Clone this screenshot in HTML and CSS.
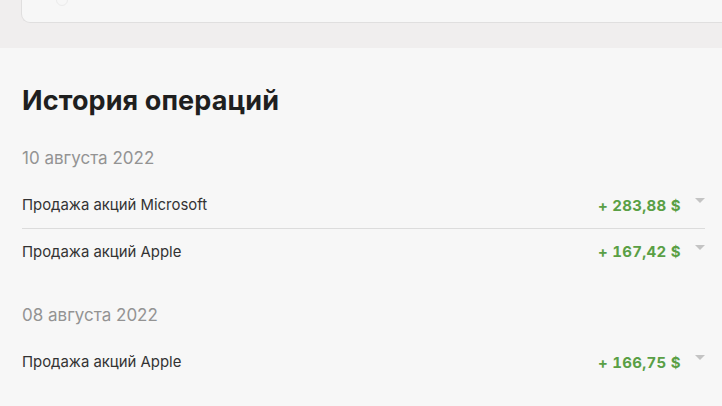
FILE: index.html
```html
<!DOCTYPE html>
<html lang="ru">
<head>
<meta charset="utf-8">
<link rel="stylesheet" href="styles.css">
</head>
<body>
<div class="top">
  <div class="card"><span class="card-dot"></span></div>
</div>
<section class="history">
  <h1 class="title">История операций</h1>
  <div class="group">
    <div class="date">10 августа 2022</div>
    <div class="row">
      <span class="name">Продажа акций Microsoft</span>
      <span class="amount">+ 283,88 $</span>
      <span class="caret"></span>
    </div>
    <div class="row">
      <span class="name">Продажа акций Apple</span>
      <span class="amount">+ 167,42 $</span>
      <span class="caret"></span>
    </div>
  </div>
  <div class="group">
    <div class="date">08 августа 2022</div>
    <div class="row">
      <span class="name">Продажа акций Apple</span>
      <span class="amount">+ 166,75 $</span>
      <span class="caret"></span>
    </div>
  </div>
</section>
</body>
</html>
```
FILE: styles.css
```css
html, body {
  margin: 0;
  padding: 0;
}
body {
  background: #f7f7f7;
  font-family: Inter, "Noto Sans", sans-serif;
  color: #262626;
  overflow: hidden;
}
.top {
  background: #f0eeee;
  height: 48px;
  padding-left: 21px;
  box-sizing: border-box;
}
.card {
  position: relative;
  height: 23px;
  box-sizing: border-box;
  background: #f7f7f7;
  border: 1px solid #e0dfdf;
  border-top: none;
  border-right: none;
  border-radius: 0 0 0 9px;
}
.card-dot {
  position: absolute;
  left: 34px;
  top: -6px;
  width: 10px;
  height: 10px;
  border-radius: 50%;
  border: 1px solid #ebebeb;
}
.history {
  padding: 0 17px 0 22px;
}
.title {
  margin: 0;
  padding-top: 35px;
  font-size: 27px;
  line-height: 36px;
  font-weight: 700;
  color: #1f1f1f;
  letter-spacing: 0.1px;
}
.group {
  margin-top: 27px;
}
.group + .group {
  margin-top: 29px;
}
.date {
  font-size: 17px;
  line-height: 24px;
  color: #939393;
  margin-bottom: 12px;
}
.row {
  display: flex;
  align-items: center;
  height: 46px;
  box-sizing: border-box;
}
.row + .row {
  border-top: 1px solid #dcdcdc;
}
.name {
  flex: 1;
  font-size: 14.9px;
  color: #333333;
}
.amount {
  font-size: 15px;
  font-weight: 700;
  color: #5a9f45;
  letter-spacing: 0.3px;
  font-variant-numeric: tabular-nums;
}
.caret {
  width: 0;
  height: 0;
  margin-left: 14px;
  margin-top: -9px;
  border-left: 5.5px solid transparent;
  border-right: 5.5px solid transparent;
  border-top: 5px solid #c4c4c4;
}
```
